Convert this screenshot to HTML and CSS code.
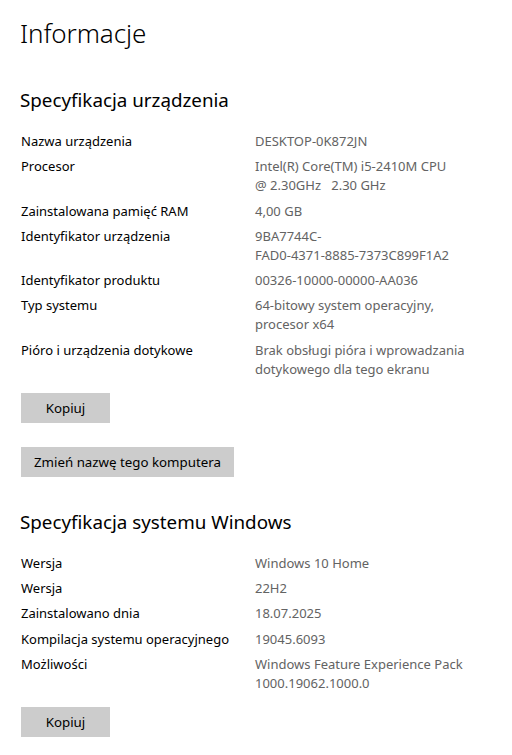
FILE: index.html
```html
<!DOCTYPE html>
<html lang="pl">
<head>
<meta charset="utf-8">
<title>Informacje</title>
<link rel="stylesheet" href="styles.css">
</head>
<body>
<main class="page">
  <h1 class="title">Informacje</h1>

  <section class="section">
    <h2 class="heading">Specyfikacja urządzenia</h2>
    <dl class="specs">
      <div class="row"><dt>Nazwa urządzenia</dt><dd>DESKTOP-0K872JN</dd></div>
      <div class="row"><dt>Procesor</dt><dd>Intel(R) Core(TM) i5-2410M CPU<br>@ 2.30GHz&nbsp;&nbsp;&nbsp;2.30 GHz</dd></div>
      <div class="row"><dt>Zainstalowana pamięć RAM</dt><dd>4,00 GB</dd></div>
      <div class="row"><dt>Identyfikator urządzenia</dt><dd>9BA7744C-<br>FAD0-4371-8885-7373C899F1A2</dd></div>
      <div class="row"><dt>Identyfikator produktu</dt><dd>00326-10000-00000-AA036</dd></div>
      <div class="row"><dt>Typ systemu</dt><dd>64-bitowy system operacyjny,<br>procesor x64</dd></div>
      <div class="row"><dt>Pióro i urządzenia dotykowe</dt><dd>Brak obsługi pióra i wprowadzania<br>dotykowego dla tego ekranu</dd></div>
    </dl>
    <div class="actions">
      <button class="btn btn-copy">Kopiuj</button>
      <button class="btn">Zmień nazwę tego komputera</button>
    </div>
  </section>

  <section class="section">
    <h2 class="heading">Specyfikacja systemu Windows</h2>
    <dl class="specs">
      <div class="row"><dt>Wersja</dt><dd>Windows 10 Home</dd></div>
      <div class="row"><dt>Wersja</dt><dd>22H2</dd></div>
      <div class="row"><dt>Zainstalowano dnia</dt><dd>18.07.2025</dd></div>
      <div class="row"><dt>Kompilacja systemu operacyjnego</dt><dd>19045.6093</dd></div>
      <div class="row"><dt>Możliwości</dt><dd>Windows Feature Experience Pack<br>1000.19062.1000.0</dd></div>
    </dl>
    <div class="actions">
      <button class="btn btn-copy">Kopiuj</button>
    </div>
  </section>
</main>
</body>
</html>
```

FILE: styles.css
```css
html, body {
  margin: 0;
  padding: 0;
  background: #ffffff;
}

body {
  font-family: "Noto Sans", "Open Sans", "Liberation Sans", sans-serif;
  color: #000000;
  width: 512px;
  height: 755px;
  overflow: hidden;
}

.page {
  padding: 11px 0 0 20px;
}

.title {
  margin: 0;
  font-size: 26px;
  font-weight: 300;
  line-height: 44px;
  color: #000;
  letter-spacing: -0.1px;
}

.section {
  margin-top: 31px;
}

.section + .section {
  margin-top: 31px;
}

.heading {
  margin: 0 0 18px 0;
  font-size: 18.8px;
  font-weight: 400;
  line-height: 28px;
  color: #000;
}

.specs {
  margin: 0;
  display: flex;
  flex-direction: column;
  gap: 6.3px;
}

.row {
  display: grid;
  grid-template-columns: 235px 1fr;
  font-size: 13px;
  line-height: 19px;
}

.row dt {
  margin: 0 0 0 1px;
  color: #000;
}

.row dd {
  margin: 0;
  color: #636363;
  white-space: nowrap;
}

.actions {
  display: flex;
  flex-direction: column;
  align-items: flex-start;
  gap: 24px;
  margin-top: 14px;
  padding-left: 1px;
}

.btn {
  font-family: inherit;
  font-size: 13.3px;
  color: #000;
  background: #cccccc;
  border: none;
  height: 30px;
  padding: 0 13px;
  margin: 0;
}

.btn-copy {
  width: 89px;
}
```
